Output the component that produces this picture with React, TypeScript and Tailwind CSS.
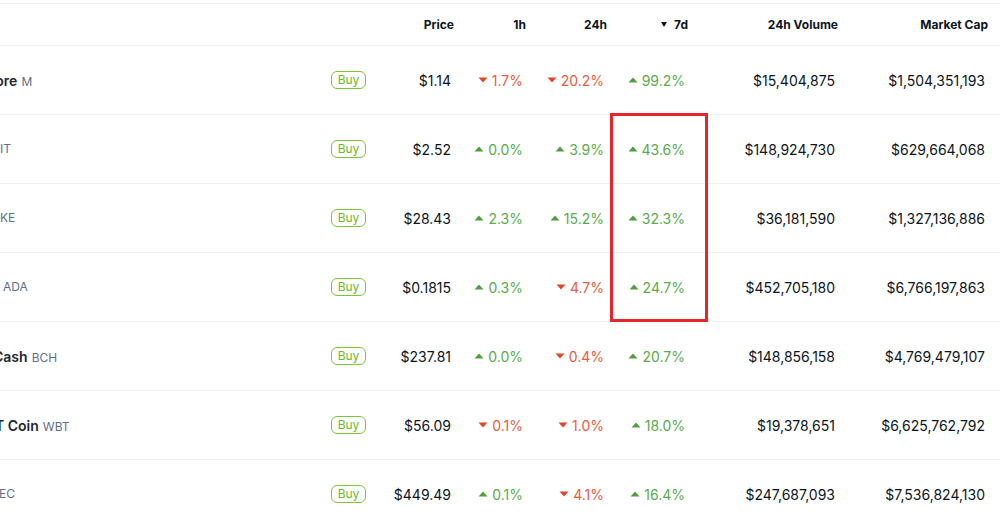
import React from 'react';

type Row = {
  name?: string;
  sym?: string;
  shift: string;
  price: string;
  h1: number;
  h24: number;
  d7: number;
  vol: string;
  cap: string;
};

const rows: Row[] = [
  { name: 'Core', sym: 'M', shift: 'ml-[-15px]', price: '$1.14', h1: -1.7, h24: -20.2, d7: 99.2, vol: '$15,404,875', cap: '$1,504,351,193' },
  { sym: 'IT', shift: 'ml-[0px]', price: '$2.52', h1: 0.0, h24: 3.9, d7: 43.6, vol: '$148,924,730', cap: '$629,664,068' },
  { sym: 'KE', shift: 'ml-[0px]', price: '$28.43', h1: 2.3, h24: 15.2, d7: 32.3, vol: '$36,181,590', cap: '$1,327,136,886' },
  { sym: 'ADA', shift: 'ml-[3px]', price: '$0.1815', h1: 0.3, h24: -4.7, d7: 24.7, vol: '$452,705,180', cap: '$6,766,197,863' },
  { name: 'Cash', sym: 'BCH', shift: 'ml-[-7px]', price: '$237.81', h1: 0.0, h24: -0.4, d7: 20.7, vol: '$148,856,158', cap: '$4,769,479,107' },
  { name: 'T Coin', sym: 'WBT', shift: 'ml-[-5px]', price: '$56.09', h1: -0.1, h24: -1.0, d7: 18.0, vol: '$19,378,651', cap: '$6,625,762,792' },
  { sym: 'EC', shift: 'ml-[-1px]', price: '$449.49', h1: 0.1, h24: -4.1, d7: 16.4, vol: '$247,687,093', cap: '$7,536,824,130' },
];

function Caret({ up }: { up: boolean }) {
  return (
    <svg width="10" height="6" viewBox="0 0 10 6" className="shrink-0">
      {up ? <path d="M0.5 5.6 L5 0.6 L9.5 5.6 Z" fill="#4e9f3d" /> : <path d="M0.5 0.4 L9.5 0.4 L5 5.4 Z" fill="#e0452a" />}
    </svg>
  );
}

function Change({ v }: { v: number }) {
  const up = v >= 0;
  return (
    <div className={`flex items-center justify-end gap-[4px] pr-[3px] ${up ? 'text-[#5aab4a]' : 'text-[#ea5b3e]'}`}>
      <Caret up={up} />
      <span>{Math.abs(v).toFixed(1)}%</span>
    </div>
  );
}

export default function App() {
  return (
    <div className="w-[1000px] h-[526px] overflow-hidden bg-white text-[#0d1421] [font-family:Inter,'Noto_Sans',sans-serif]">
      <div className="relative pt-[3px]">
        <div className="flex h-[43px] items-center border-y border-[#eff2f5] pr-[12px] text-[12px] font-bold">
          <div className="flex-1" />
          <div className="w-[39px]" />
          <div className="w-[84px] text-right">Price</div>
          <div className="w-[72px] text-right">1h</div>
          <div className="w-[81px] text-right">24h</div>
          <div className="flex w-[81px] items-center justify-end gap-[7px]">
            <svg width="6" height="5" viewBox="0 0 6 5">
              <path d="M0 0 L6 0 L3 5 Z" fill="#0d1421" />
            </svg>
            <span>7d</span>
          </div>
          <div className="w-[150px] text-right">24h Volume</div>
          <div className="w-[150px] text-right">Market Cap</div>
        </div>

        {rows.map((r, i) => (
          <div key={i} className="flex h-[69px] items-center border-b border-[#eff2f5] pr-[12px] text-[14px]">
            <div className="flex-1 overflow-hidden whitespace-nowrap">
              <div className={`flex items-baseline gap-[4px] ${r.shift}`}>
                {r.name && <span className="font-semibold text-[#222531]">{r.name}</span>}
                {r.sym && <span className="text-[12px] text-[#616e85]">{r.sym}</span>}
              </div>
            </div>
            <div className="w-[39px]">
              <button className="flex h-[18px] w-[35px] items-center justify-center rounded-[6px] border border-[#7cc63a] text-[12px] leading-none text-[#6cb92c]">
                Buy
              </button>
            </div>
            <div className="w-[84px] pr-[3px] text-right">{r.price}</div>
            <div className="w-[72px]"><Change v={r.h1} /></div>
            <div className="w-[81px]"><Change v={r.h24} /></div>
            <div className="w-[81px]"><Change v={r.d7} /></div>
            <div className="w-[150px] pr-[3px] text-right">{r.vol}</div>
            <div className="w-[150px] pr-[3px] text-right">{r.cap}</div>
          </div>
        ))}

        <div className="absolute left-[610px] top-[113px] h-[209px] w-[98px] border-[3px] border-[#e5262b]" />
      </div>
    </div>
  );
}
